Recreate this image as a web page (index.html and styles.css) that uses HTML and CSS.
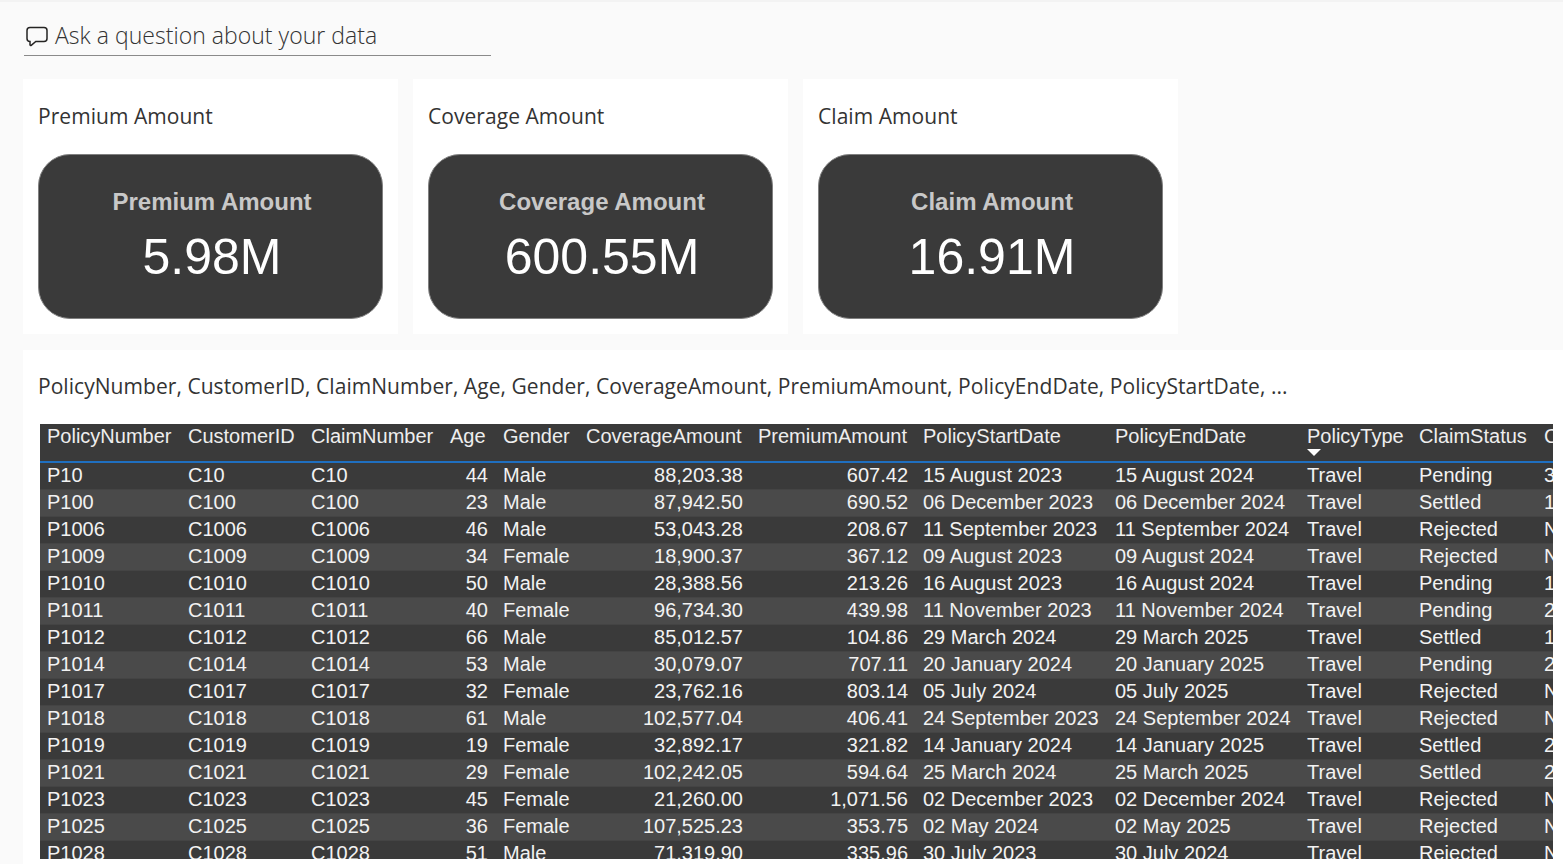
FILE: index.html
```html
<!DOCTYPE html>
<html lang="en">
<head>
<meta charset="utf-8">
<title>Ask a question about your data</title>
<link rel="stylesheet" href="styles.css">
</head>
<body>
<div class="page">
  <div class="qa">
    <svg class="qa-icon" viewBox="0 0 24 24" width="24" height="24" aria-hidden="true"><path d="M5 3.500h14a3 3 0 0 1 3 3v8a3 3 0 0 1-3 3h-8.200l-4.600 3.800c-.6.5-1.200.1-1.200-.6v-3.200A3 3 0 0 1 2 14.500v-8a3 3 0 0 1 3-3z" fill="none" stroke="#252423" stroke-width="1.500"/></svg>
    <span class="qa-text">Ask a question about your data</span>
  </div>
  <div class="cards">
    <section class="card">
      <h2 class="card-title">Premium Amount</h2>
      <div class="kpi"><div class="kpi-label">Premium Amount</div><div class="kpi-value">5.98M</div></div>
    </section>
    <section class="card">
      <h2 class="card-title">Coverage Amount</h2>
      <div class="kpi"><div class="kpi-label">Coverage Amount</div><div class="kpi-value">600.55M</div></div>
    </section>
    <section class="card">
      <h2 class="card-title">Claim Amount</h2>
      <div class="kpi"><div class="kpi-label">Claim Amount</div><div class="kpi-value">16.91M</div></div>
    </section>
  </div>
  <section class="table-card">
    <h2 class="table-title">PolicyNumber, CustomerID, ClaimNumber, Age, Gender, CoverageAmount, PremiumAmount, PolicyEndDate, PolicyStartDate, ...</h2>
    <div class="table-wrap">
      <table class="grid">
        <colgroup>
          <col class="c1"><col class="c2"><col class="c3"><col class="c4"><col class="c5"><col class="c6"><col class="c7"><col class="c8"><col class="c9"><col class="c10"><col class="c11"><col class="c12">
        </colgroup>
        <thead>
          <tr>
            <th>PolicyNumber</th><th>CustomerID</th><th>ClaimNumber</th><th>Age</th><th>Gender</th><th>CoverageAmount</th><th>PremiumAmount</th><th>PolicyStartDate</th><th>PolicyEndDate</th>
            <th><span class="sorted">PolicyType</span><span class="caret"></span></th><th>ClaimStatus</th><th>C</th>
          </tr>
        </thead>
        <tbody>
          <tr><td>P10</td><td>C10</td><td>C10</td><td class="r">44</td><td>Male</td><td class="r">88,203.38</td><td class="r">607.42</td><td>15 August 2023</td><td>15 August 2024</td><td>Travel</td><td>Pending</td><td>3</td></tr>
          <tr><td>P100</td><td>C100</td><td>C100</td><td class="r">23</td><td>Male</td><td class="r">87,942.50</td><td class="r">690.52</td><td>06 December 2023</td><td>06 December 2024</td><td>Travel</td><td>Settled</td><td>1</td></tr>
          <tr><td>P1006</td><td>C1006</td><td>C1006</td><td class="r">46</td><td>Male</td><td class="r">53,043.28</td><td class="r">208.67</td><td>11 September 2023</td><td>11 September 2024</td><td>Travel</td><td>Rejected</td><td>N</td></tr>
          <tr><td>P1009</td><td>C1009</td><td>C1009</td><td class="r">34</td><td>Female</td><td class="r">18,900.37</td><td class="r">367.12</td><td>09 August 2023</td><td>09 August 2024</td><td>Travel</td><td>Rejected</td><td>N</td></tr>
          <tr><td>P1010</td><td>C1010</td><td>C1010</td><td class="r">50</td><td>Male</td><td class="r">28,388.56</td><td class="r">213.26</td><td>16 August 2023</td><td>16 August 2024</td><td>Travel</td><td>Pending</td><td>1</td></tr>
          <tr><td>P1011</td><td>C1011</td><td>C1011</td><td class="r">40</td><td>Female</td><td class="r">96,734.30</td><td class="r">439.98</td><td>11 November 2023</td><td>11 November 2024</td><td>Travel</td><td>Pending</td><td>2</td></tr>
          <tr><td>P1012</td><td>C1012</td><td>C1012</td><td class="r">66</td><td>Male</td><td class="r">85,012.57</td><td class="r">104.86</td><td>29 March 2024</td><td>29 March 2025</td><td>Travel</td><td>Settled</td><td>1</td></tr>
          <tr><td>P1014</td><td>C1014</td><td>C1014</td><td class="r">53</td><td>Male</td><td class="r">30,079.07</td><td class="r">707.11</td><td>20 January 2024</td><td>20 January 2025</td><td>Travel</td><td>Pending</td><td>2</td></tr>
          <tr><td>P1017</td><td>C1017</td><td>C1017</td><td class="r">32</td><td>Female</td><td class="r">23,762.16</td><td class="r">803.14</td><td>05 July 2024</td><td>05 July 2025</td><td>Travel</td><td>Rejected</td><td>N</td></tr>
          <tr><td>P1018</td><td>C1018</td><td>C1018</td><td class="r">61</td><td>Male</td><td class="r">102,577.04</td><td class="r">406.41</td><td>24 September 2023</td><td>24 September 2024</td><td>Travel</td><td>Rejected</td><td>N</td></tr>
          <tr><td>P1019</td><td>C1019</td><td>C1019</td><td class="r">19</td><td>Female</td><td class="r">32,892.17</td><td class="r">321.82</td><td>14 January 2024</td><td>14 January 2025</td><td>Travel</td><td>Settled</td><td>2</td></tr>
          <tr><td>P1021</td><td>C1021</td><td>C1021</td><td class="r">29</td><td>Female</td><td class="r">102,242.05</td><td class="r">594.64</td><td>25 March 2024</td><td>25 March 2025</td><td>Travel</td><td>Settled</td><td>2</td></tr>
          <tr><td>P1023</td><td>C1023</td><td>C1023</td><td class="r">45</td><td>Female</td><td class="r">21,260.00</td><td class="r">1,071.56</td><td>02 December 2023</td><td>02 December 2024</td><td>Travel</td><td>Rejected</td><td>N</td></tr>
          <tr><td>P1025</td><td>C1025</td><td>C1025</td><td class="r">36</td><td>Female</td><td class="r">107,525.23</td><td class="r">353.75</td><td>02 May 2024</td><td>02 May 2025</td><td>Travel</td><td>Rejected</td><td>N</td></tr>
          <tr><td>P1028</td><td>C1028</td><td>C1028</td><td class="r">51</td><td>Male</td><td class="r">71,319.90</td><td class="r">335.96</td><td>30 July 2023</td><td>30 July 2024</td><td>Travel</td><td>Rejected</td><td>N</td></tr>
        </tbody>
      </table>
    </div>
  </section>
</div>
</body>
</html>
```
FILE: styles.css
```css
* { box-sizing: border-box; }
html, body { margin: 0; height: 100%; }
body {
  background: #fafafa;
  overflow: hidden;
  font-family: "Open Sans", "Noto Sans", sans-serif;
  color: #252423;
}
.page { border-top: 2px solid #f3f3f3; padding: 18px 0 0 23px; height: 864px; overflow: hidden; }
.qa {
  margin-left: 1px;
  width: 467px;
  height: 36px;
  border-bottom: 1px solid #8a8a8a;
  display: flex;
  align-items: center;
  gap: 6px;
  padding: 0 0 6px 1px;
}
.qa-icon { flex: none; width: 24px; height: 24px; margin-top: 2px; }
.qa-text { font-size: 23px; font-weight: 300; letter-spacing: .03px; color: #333; white-space: nowrap; }
.cards { display: flex; gap: 15px; margin-top: 23px; }
.card {
  width: 375px;
  height: 255px;
  background: #fff;
  padding: 0 15px;
}
.card-title, .table-title {
  margin: 0;
  font-weight: 400;
  font-size: 21px;
  letter-spacing: .05px;
  color: #333;
  white-space: nowrap;
}
.card-title { height: 75px; line-height: 74px; }
.kpi {
  height: 165px;
  background: #3a3a3a;
  border: 1px solid #808080;
  border-radius: 32px;
  text-align: center;
  font-family: "Liberation Sans", Arial, sans-serif;
  display: flex;
  flex-direction: column;
  align-items: center;
  padding-left: 3px;
}
.kpi-label { margin-top: 33px; font-size: 24px; line-height: 28px; font-weight: 700; color: #c8c8c8; }
.kpi-value { margin-top: 11px; font-size: 50px; line-height: 60px; color: #fff; }
.table-card {
  margin-top: 16px;
  background: #fff;
  height: 514px;
  padding-left: 15px;
}
.table-title { height: 74px; line-height: 72px; }
.table-wrap {
  margin-left: 2px;
  width: 1513px;
  height: 435px;
  overflow: hidden;
}
.grid {
  table-layout: fixed;
  border-collapse: separate;
  border-spacing: 0;
  width: 1513px;
  font-family: "Liberation Sans", Arial, sans-serif;
  font-size: 20px;
  color: #fff;
}
.c1 { width: 141px; } .c2 { width: 123px; } .c3 { width: 139px; } .c4 { width: 53px; }
.c5 { width: 83px; } .c6 { width: 172px; } .c7 { width: 165px; } .c8 { width: 192px; }
.c9 { width: 192px; } .c10 { width: 112px; } .c11 { width: 125px; } .c12 { width: 16px; }
th, td { padding: 0 7px; white-space: nowrap; overflow: hidden; font-weight: 400; text-align: left; }
th {
  position: relative;
  height: 39px;
  background: #3a3a3a;
  border-bottom: 2px solid #1f6fc0;
  vertical-align: top;
  line-height: 24px;
  color: #eee;
}
td { height: 27px; line-height: 24px; padding-bottom: 2px; border-bottom: 1px solid #444; color: #f2f2f2; }
td.r { text-align: right; padding-right: 8px; }
tbody tr:nth-child(odd) td { background: #3a3a3a; }
tbody tr:nth-child(even) td { background: #4a4a4a; }
.sorted { display: block; }
.caret {
  position: absolute;
  left: 7px;
  top: 25px;
  width: 0;
  height: 0;
  border-left: 7px solid transparent;
  border-right: 7px solid transparent;
  border-top: 7px solid #fff;
}
```
